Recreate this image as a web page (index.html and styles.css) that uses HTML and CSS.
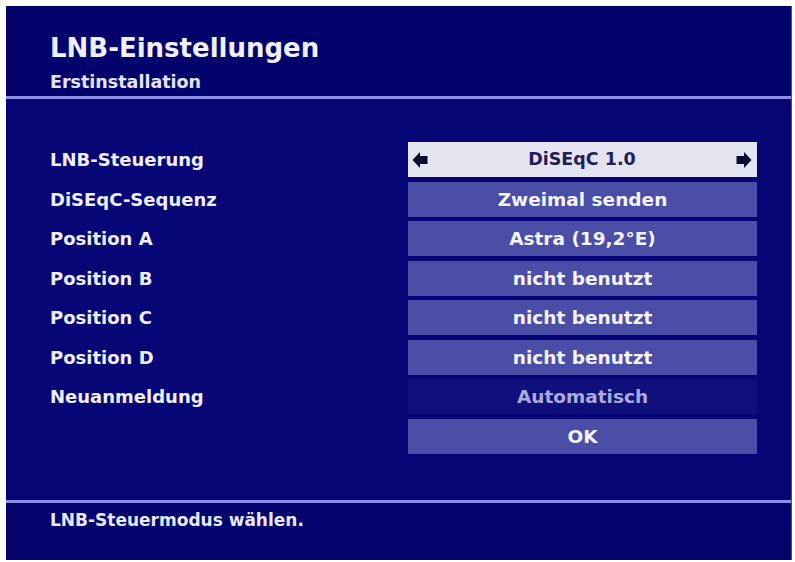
FILE: index.html
```html
<!DOCTYPE html>
<html lang="de">
<head>
<meta charset="utf-8">
<title>LNB-Einstellungen</title>
<link rel="stylesheet" href="styles.css">
</head>
<body>
<div class="screen">
  <header class="head">
    <h1 class="title">LNB-Einstellungen</h1>
    <div class="subtitle">Erstinstallation</div>
  </header>
  <div class="rule"></div>
  <main class="body">
    <div class="rows">
      <div class="label">LNB-Steuerung</div>
      <div class="box box-selected">
        <svg class="arrow" viewBox="0 0 16 18" width="16" height="18"><polygon points="0.5,9 8,1 8,5 15.5,5 15.5,13 8,13 8,17" /></svg>
        <span class="val">DiSEqC 1.0</span>
        <svg class="arrow" viewBox="0 0 16 18" width="16" height="18"><polygon points="15.5,9 8,1 8,5 0.5,5 0.5,13 8,13 8,17" /></svg>
      </div>

      <div class="label">DiSEqC-Sequenz</div>
      <div class="box">Zweimal senden</div>

      <div class="label">Position A</div>
      <div class="box">Astra (19,2°E)</div>

      <div class="label">Position B</div>
      <div class="box">nicht benutzt</div>

      <div class="label">Position C</div>
      <div class="box">nicht benutzt</div>

      <div class="label">Position D</div>
      <div class="box">nicht benutzt</div>

      <div class="label">Neuanmeldung</div>
      <div class="box box-disabled">Automatisch</div>

      <div class="label"></div>
      <div class="box">OK</div>
    </div>
  </main>
  <div class="rule"></div>
  <footer class="foot">LNB-Steuermodus wählen.</footer>
</div>
</body>
</html>
```

FILE: styles.css
```css
html, body {
  margin: 0;
  padding: 0;
  background: #ffffff;
}

body {
  font-family: "DejaVu Sans", "Liberation Sans", sans-serif;
  font-weight: bold;
}

.screen {
  margin: 6px 3px 2px 6px;
  width: 786px;
  height: 554px;
  background: #03036e;
  display: flex;
  flex-direction: column;
  color: #eeeefc;
  border-right: 1px solid #4a4ab4;
  box-sizing: border-box;
}

.head {
  height: 90px;
  box-sizing: border-box;
  padding: 27px 0 0 44px;
  background: #02026c;
}

.title {
  margin: 0;
  font-size: 26px;
  line-height: 30px;
  font-weight: bold;
  color: #f0f0fc;
}

.subtitle {
  margin-top: 9px;
  font-size: 17.5px;
  line-height: 20px;
  color: #e4e4f8;
}

.rule {
  height: 3px;
  background: #8c90e4;
  flex: none;
}

.body {
  flex: 1;
  box-sizing: border-box;
  padding: 43px 34px 0 44px;
  background: #050576;
}

.rows {
  display: grid;
  grid-template-columns: 358px 349px;
  grid-auto-rows: 35px;
  row-gap: 4.5px;
}

.label {
  font-size: 18px;
  line-height: 35px;
  color: #eeeefc;
}

.box {
  background: #4a4ea6;
  color: #f4f4ff;
  font-size: 18.5px;
  line-height: 35px;
  text-align: center;
}

.box-selected {
  background: #e4e4f0;
  color: #1e1e5a;
  display: flex;
  align-items: center;
  justify-content: space-between;
  padding: 0 5px 0 4px;
}

.box-selected .val {
  flex: 1;
  text-align: center;
  font-size: 17.5px;
}

.arrow {
  fill: #0a0a30;
  flex: none;
}

.box-disabled {
  background: #10107c;
  color: #a9acda;
}

.foot {
  height: 57px;
  box-sizing: border-box;
  padding: 7px 0 0 44px;
  font-size: 17px;
  line-height: 20px;
  background: #03036e;
  color: #e8e8fa;
}
```
